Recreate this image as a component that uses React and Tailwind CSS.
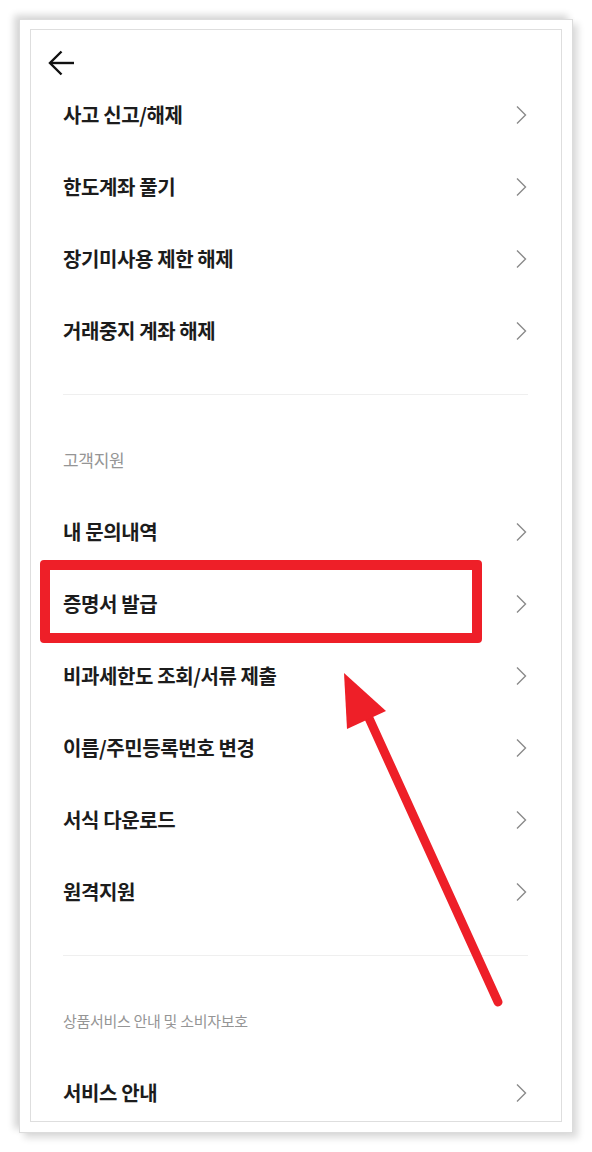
import React from 'react';

const Chevron = () => (
  <svg width="14" height="20" viewBox="0 0 14 20" fill="none" className="shrink-0">
    <path d="M3 1.5 L11.5 10 L3 18.5" stroke="#8a8a8a" strokeWidth="1.4" />
  </svg>
);

const BackArrow = () => (
  <svg width="28" height="28" viewBox="0 0 28 28" fill="none">
    <path d="M27 14 H3" stroke="#111" strokeWidth="2.4" />
    <path d="M14.5 2.5 L3 14 L14.5 25.5" stroke="#111" strokeWidth="2.4" />
  </svg>
);

const Row = ({ label }) => (
  <div className="flex items-center justify-between h-[72px]">
    <span className="text-[20px] font-bold text-[#1c1c1c] leading-none tracking-[-0.4px]">{label}</span>
    <Chevron />
  </div>
);

const SectionTitle = ({ label, size }) => (
  <div className="pt-[53px] pb-[24px]">
    <div className={`${size} leading-[24px] text-[#959595] tracking-[-0.3px]`}>{label}</div>
  </div>
);

const Divider = () => <div className="mt-[27px] h-px bg-[#efefef]" />;

export default function App() {
  const top = ['사고 신고/해제', '한도계좌 풀기', '장기미사용 제한 해제', '거래중지 계좌 해제'];
  const support = ['내 문의내역', '증명서 발급', '비과세한도 조회/서류 제출', '이름/주민등록번호 변경', '서식 다운로드', '원격지원'];

  return (
    <div
      className="relative w-[592px] h-[1152px] bg-white overflow-hidden"
      style={{ fontFamily: '"Noto Sans CJK KR", "Noto Sans", sans-serif' }}
    >
      <div className="ml-[19px] mt-[19px] w-[554px] h-[1114px] bg-white border border-[#dcdcdc] pt-[9px] px-[10px] pb-[10px] shadow-[-5px_-4px_7px_rgba(0,0,0,0.16),5px_5px_7px_rgba(0,0,0,0.14)]">
        <div className="h-full border border-[#dedede] overflow-hidden pl-[32px] pr-[33px]">
          <div className="h-[49px] pt-[19px] -ml-[16px]">
            <BackArrow />
          </div>
          {top.map(t => <Row key={t} label={t} />)}
          <Divider />
          <SectionTitle label="고객지원" size="text-[17px]" />
          {support.map(t => <Row key={t} label={t} />)}
          <Divider />
          <SectionTitle label="상품서비스 안내 및 소비자보호" size="text-[15px]" />
          <Row label="서비스 안내" />
        </div>
      </div>

      {/* annotation: highlight box */}
      <div className="absolute left-[40px] top-[560px] w-[442px] h-[83px] border-[10px] border-[#ee1f28] rounded-[4px]" />

      {/* annotation: arrow */}
      <svg className="absolute left-0 top-0" width="592" height="1152" viewBox="0 0 592 1152">
        <line x1="498" y1="1002" x2="368" y2="716" stroke="#ee1f28" strokeWidth="9" strokeLinecap="round" />
        <polygon points="344,673 347,729 386,711" fill="#ee1f28" />
      </svg>
    </div>
  );
}
